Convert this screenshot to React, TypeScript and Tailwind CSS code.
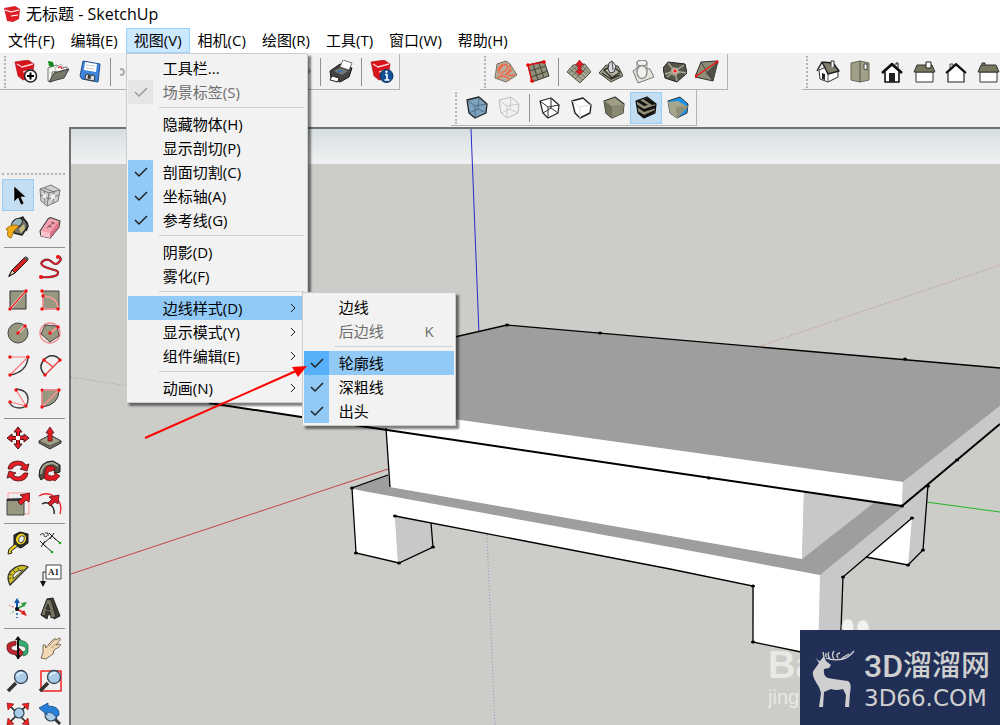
import type { ReactNode } from 'react';

type IconProps = { children: ReactNode };

function Icon({ children }: IconProps) {
  return (
    <svg viewBox="0 0 24 24" className="size-6 shrink-0" aria-hidden="true" strokeLinejoin="round">
      {children}
    </svg>
  );
}

const redBook = (
  <>
    <path d="M1 2 14 0l6 4-2 14-9 2-5-4Z" fill="#d8141c" stroke="#a50d12" strokeWidth=".6" />
    <path d="m3 4 5 3 11-3M9 12l9-2M10 16l7-2" fill="none" stroke="#ffd5d5" strokeWidth="1.3" />
  </>
);

const icons = {
  create: (
    <Icon>
      {redBook}
      <circle cx="16.5" cy="16" r="6" fill="#fff" stroke="#222" strokeWidth="1.6" />
      <path d="M16.5 12.5v7M13 16h7" stroke="#000" strokeWidth="2" />
    </Icon>
  ),
  open: (
    <Icon>
      <path d="M2 8v13l4 1V12l15-2V7l-8 1-2-3Z" fill="#f3f3ee" stroke="#555" strokeWidth=".8" />
      <path d="m9 8 6-4 3 6-7 2Z" fill="#fff" stroke="#888" strokeWidth=".6" />
      <path d="M12 8q3-3 4 1" fill="none" stroke="#d33" strokeWidth="1.6" />
      <path d="m3 22 5-9 15-4-5 9Z" fill="#77776a" stroke="#333" strokeWidth=".9" />
      <path d="m2 1 5 1 1 4-3 1-2-1Z" fill="#128a1b" />
    </Icon>
  ),
  save: (
    <Icon>
      <path d="m5 1 17 3-2 18-16-3-2-3Z" fill="#3e86dd" stroke="#22508c" />
      <path d="m7 2 12 2-1 8L6 10Z" fill="#fff" />
      <path d="m8 5 9 1M8 8l8 1" stroke="#aaa" strokeWidth=".7" />
      <path d="m8 14 9 2-1 5-9-2Z" fill="#ddd" stroke="#333" strokeWidth=".9" />
      <path d="m10 15 3 .5-.5 3.5-3-.5Z" fill="#333" />
    </Icon>
  ),
  blank: (
    <Icon>
      <path d="M1 9q4 0 4 3t-4 3M18 7l4 4-4 4" fill="none" stroke="#aaa" strokeWidth="2" />
    </Icon>
  ),
  print: (
    <Icon>
      <path d="m1 11 10-7 12 4-3 9-9 5-9-4Z" fill="#444" stroke="#181818" />
      <path d="m11 7 3-7 9 3-3 7Z" fill="#fff" stroke="#555" strokeWidth=".8" />
      <path d="m5 11 6-3 8 3-6 4Z" fill="#777" />
      <path d="m8 11 4-1 2 1-4 2Z" fill="#2f75b5" />
      <path d="m3 16 7 2-1 4-8-2Z" fill="#fff" stroke="#222" />
    </Icon>
  ),
  info: (
    <Icon>
      {redBook}
      <circle cx="16.5" cy="16" r="6.5" fill="#134f94" stroke="#0b2e58" />
      <path d="M15 14.5h2V20M14.5 20h5" stroke="#fff" strokeWidth="1.6" fill="none" />
      <circle cx="16.5" cy="11.8" r="1.2" fill="#fff" />
    </Icon>
  ),
  contours: (
    <Icon>
      <path d="m3 4 9-3 4 3 7 11-11 7-11-4Z" fill="#b9ae9c" stroke="#777060" />
      <path d="M3 18q7-5 13 2M5 14q0-8 7-10 4 5-3 8-3 2 0 4M9 4q-5 3-5 7M15 5q3 5-2 8 4 5 8 1M11 15l7-5" fill="none" stroke="#ee6a4a" strokeWidth="1.4" />
    </Icon>
  ),
  scratch: (
    <Icon>
      <path d="m2 5 16-4 5 15-17 6Z" fill="#8f8f7a" stroke="#3a3a32" />
      <path d="m7 4 5 16M13 3l5 15M3 11l17-5M5 17l17-6" stroke="#444438" />
      <path d="M18 2 2 5l4 17" fill="none" stroke="#e0121a" strokeWidth="1.4" />
      <circle cx="18" cy="2" r="1.8" fill="#e00" /><circle cx="2" cy="5" r="1.8" fill="#e00" /><circle cx="6" cy="21" r="1.8" fill="#e00" />
    </Icon>
  ),
  smoove: (
    <Icon>
      <path d="m0 12 6-7 12-1 6 8-11 11Z" fill="#a8a792" stroke="#55554a" />
      <path d="m3 9 13 11M5 6l13 11M9 5l11 9M13 4l9 9M20 7 8 19M17 5 5 16M12 5 2 13" stroke="#5d5d50" strokeWidth=".8" />
      <path d="m12.500 0 4 5h-2.500v6h2.500l-4 4-4-4h2.500V5H8.500Z" fill="#e31b23" stroke="#8b0d10" strokeWidth=".6" />
    </Icon>
  ),
  stamp: (
    <Icon>
      <path d="m0 13 7-8 12 1 5 10-12 6Z" fill="#9d9c86" stroke="#3f3f35" />
      <path d="m5 10 8-4 8 6-8 6ZM3 13l9 6 9-4" fill="#bdbca8" stroke="#33332b" strokeWidth="1.500" />
      <path d="m9 9 1-6 3-2 4 5-2 6-4 1Z" fill="#d9dade" stroke="#35353a" />
      <path d="m13 2 1 8" stroke="#555" />
    </Icon>
  ),
  drape: (
    <Icon>
      <path d="m2 11 5-4 12 2 4 8-16 6Z" fill="#e4e4dc" stroke="#777" />
      <ellipse cx="11" cy="3" rx="5" ry="3" fill="none" stroke="#888" strokeWidth="1.4" />
      <ellipse cx="11" cy="12" rx="5" ry="6.500" fill="#f0f0ea" stroke="#888" strokeWidth="1.300" />
      <path d="M6 3v9M16 3v9" stroke="#999" />
    </Icon>
  ),
  detail: (
    <Icon>
      <path d="m0 8 5-6 17 2 2 9-10 9L2 18Z" fill="#55554a" stroke="#222" />
      <path d="m5 3 7 8L2 14M21 5l-9 6 11 2M14 21l-2-10-8 6" fill="none" stroke="#a9a893" strokeWidth="1.500" />
      <path d="m9 7 6 1 2 5-6 3-4-3Z" fill="#a5a38f" />
      <circle cx="12" cy="11" r="2" fill="#f11" stroke="#fff" strokeWidth=".6" />
    </Icon>
  ),
  flip: (
    <Icon>
      <path d="m6 2 17-1-5 20L0 17Z" fill="#8d8c76" stroke="#333" />
      <path d="m23 1-5 20-7-8Z" fill="#4f4f44" />
      <path d="m6 2 6 10 6 9" fill="none" stroke="#444" />
      <path d="M23 1 0 17" stroke="#e11" strokeWidth="1.300" />
      <circle cx="22" cy="2" r="1.500" fill="#e11" /><circle cx="1" cy="16" r="1.500" fill="#e11" />
    </Icon>
  ),
  iso: (
    <Icon>
      <path d="m3 10 1 9 8 3 10-5v-6l-5-7Z" fill="#fff" stroke="#333" />
      <path d="m12 14v8" stroke="#555" />
      <path d="m6 2 11 1 6 8-11 3L6 2 1 11" fill="#7e7d69" stroke="#222" strokeWidth="1.500" />
      <path d="M15 6V1h3v7" fill="#fff" stroke="#333" />
      <path d="m6 13 3 1v6l-3-1Z" fill="#222" />
    </Icon>
  ),
  top: (
    <Icon>
      <path d="m3 3 9-2 9 2v17l-9 2-9-2Z" fill="#a09f87" stroke="#66665a" />
      <path d="M12 1v21" stroke="#55554a" />
      <path d="M16 4h3v6l-3-1Z" fill="#fff" stroke="#444" />
    </Icon>
  ),
  front: (
    <Icon>
      <path d="M5 11v11h14V11l-7-6Z" fill="#fff" stroke="#111" strokeWidth="1.600" />
      <path d="M16 5V3h2v5" stroke="#111" fill="#fff" />
      <path d="m2 13 10-9 10 9" fill="none" stroke="#111" strokeWidth="2.400" />
      <path d="M9 13h6v9H9Z" fill="#222" />
    </Icon>
  ),
  right: (
    <Icon>
      <path d="M4 12h17v10H4Z" fill="#fff" stroke="#333" />
      <path d="m2 12 3-7h15l3 7Z" fill="#77775f" stroke="#333" />
      <path d="M14 2h5v6h-5Z" fill="#fff" stroke="#222" />
    </Icon>
  ),
  back: (
    <Icon>
      <path d="M4 12v10h16V12l-8-7Z" fill="#fff" stroke="#222" strokeWidth="1.200" />
      <path d="M6 9V4h3v3" fill="#ccc" stroke="#555" />
      <path d="m2 13 10-9 10 9" fill="none" stroke="#111" strokeWidth="2" />
    </Icon>
  ),
  left: (
    <Icon>
      <path d="M4 12h17v10H4Z" fill="#fff" stroke="#333" />
      <path d="m2 12 3-7h15l3 7Z" fill="#77775f" stroke="#333" />
      <path d="M6 5V3h3v2" fill="#77775f" stroke="#333" />
    </Icon>
  ),
  xray: (
    <Icon>
      <path d="m2 4 12-3 8 7-1 9-11 5-6-5Z" fill="#7ea3bd" stroke="#222" strokeWidth="1.300" />
      <path d="m2 4 8 6 12-2M10 10v12M14 1l-1 12 8 4M4 17l9-4" fill="none" stroke="#426176" strokeWidth=".8" />
    </Icon>
  ),
  backEdges: (
    <Icon>
      <path d="m2 4 12-3 8 7-1 9-11 5-6-5Z" fill="#f1f1f1" stroke="#bbb" />
      <path d="m2 4 8 6 12-2M10 10v12M14 1l-1 12 8 4M4 17l9-4" fill="none" stroke="#c9c9c9" />
    </Icon>
  ),
  wireframe: (
    <Icon>
      <path d="m2 5 11-3 8 7-1 8-10 5-5-5Z" fill="#fff" stroke="#222" strokeWidth="1.200" />
      <path d="m2 5 8 6 11-2M10 11v11M13 2v10l7 5M5 17l8-5" fill="none" stroke="#333" />
    </Icon>
  ),
  hiddenLine: (
    <Icon>
      <path d="m2 5 11-3 8 7-1 8-10 5-5-5Z" fill="#fff" stroke="#222" strokeWidth="1.400" />
      <path d="m2 5 8 6 11-2M10 11v11" fill="none" stroke="#ddd" />
    </Icon>
  ),
  shaded: (
    <Icon>
      <path d="m2 5 11-4 9 7-1 9-11 5-6-5Z" fill="#a09e86" stroke="#333" strokeWidth="1.200" />
      <path d="m10 10 12-2-1 9-11 5Z" fill="#8b8973" />
      <path d="m2 5 8 5v12L4 17Z" fill="#727160" />
    </Icon>
  ),
  textured: (
    <Icon>
      <path d="m2 5 11-4 9 7-1 9-11 5-6-5Z" fill="#918f78" stroke="#111" strokeWidth="1.200" />
      <path d="m2 5 4-1 8 5-4 1ZM9 3l4-1 9 6-4 1ZM2 8l8 5 12-4v3l-12 4-7-5ZM4 15l6 4 11-5-1 3-10 5-5-4Z" fill="#111" />
    </Icon>
  ),
  mono: (
    <Icon>
      <path d="m2 5 12-4 8 7-1 9-10 5-7-5Z" fill="#1794ea" stroke="#333" />
      <path d="m2 6 10-1 10 6-11 11-7-5Z" fill="#a7a58d" />
      <path d="m10 11 12-1-11 12Z" fill="#918f78" />
    </Icon>
  ),
  select: (
    <Icon>
      <path d="M8 3v16l4-4 3 7 3-1.500-3-6.500h5Z" fill="#000" stroke="#fff" strokeWidth=".5" />
    </Icon>
  ),
  component: (
    <Icon>
      <path d="m2 6 11-4 9 5-2 11-11 5-6-5Z" fill="#d0d0d0" stroke="#777" />
      <path d="m2 6 9 4 11-3M11 10 9 23M6 5l10 4-1 11M3 12l8 4 10-4M6 8l1 12" fill="none" stroke="#777" />
      <path d="m5 10 3 2v4l-3-2ZM13 12l4-1v4l-4 2Z" fill="#eee" />
    </Icon>
  ),
  paint: (
    <Icon>
      <path d="m8 5 9-4 5 9-6 9-8-2Z" fill="#74746a" stroke="#222" strokeWidth="1.400" />
      <ellipse cx="11" cy="7" rx="6" ry="4" fill="#95b7bb" stroke="#222" transform="rotate(-35 11 7)" />
      <path d="M15 2q10 4 5 13" fill="none" stroke="#222" strokeWidth="1.500" />
      <path d="M0 13q6-6 13-3-6 4-8 12-5-1-3-7Z" fill="#efac16" stroke="#8b5e00" strokeWidth=".8" />
      <path d="m13 13 5-5 1 5-4 4Z" fill="#c5b979" />
    </Icon>
  ),
  eraser: (
    <Icon>
      <path d="m2 15 8-12q2-2 4-1l8 3-1 6-9 11-9-2Z" fill="#f4a3b1" stroke="#444" strokeWidth="1.200" />
      <path d="m3 15 9 2v5l-9-2Z" fill="#f9c3cd" /><path d="m12 17 9-12v6l-9 11Z" fill="#dd7286" />
      <path d="m9 12 7-6M10 10l4 1M13 6l4 2" stroke="#8c5060" />
    </Icon>
  ),
  pencil: (
    <Icon>
      <path d="m3 21 3-6L19 2l3 3L9 18Z" fill="#d62322" stroke="#222" />
      <path d="m6 15 3 3-6 3Z" fill="#e8d1a8" stroke="#222" /><path d="m18 3 3 3 2-2-3-3Z" fill="#555" />
      <path d="m2 22 2-3 1 2Z" fill="#111" />
    </Icon>
  ),
  freehand: (
    <Icon>
      <path d="M2 22q12 1 17-2 3-4-3-5l-9-3q-6-3-2-6 5-3 9 1t7 0q4-3-1-6" fill="none" stroke="#333" strokeWidth="2.200" />
      <path d="M2 22q12 1 17-2 3-4-3-5l-9-3q-6-3-2-6 5-3 9 1t7 0q4-3-1-6" fill="none" stroke="#df1c27" strokeWidth="1.600" />
      <circle cx="3" cy="22" r="2" fill="#e11" /><circle cx="20" cy="2" r="2" fill="#e11" />
    </Icon>
  ),
  rect: (
    <Icon>
      <path d="M4 3h16v18H4Z" fill="#98977f" stroke="#333" />
      <path d="M20 3 4 21" stroke="#fff" strokeWidth="2.500" /><path d="M20 3 4 21" stroke="#e11" strokeWidth="1.200" />
      <circle cx="20" cy="3" r="1.700" fill="#e11" /><circle cx="4" cy="21" r="1.700" fill="#e11" />
    </Icon>
  ),
  rotRect: (
    <Icon>
      <path d="M5 3h16v18H5Z" fill="#98977f" stroke="#444" />
      <path d="M5 3v18h15Q20 9 5 8" fill="none" stroke="#ff9b9b" strokeWidth="1.500" />
      <circle cx="4" cy="3" r="1.700" fill="#e11" /><circle cx="5" cy="8" r="1.700" fill="#e11" />
      <circle cx="4" cy="21" r="1.700" fill="#e11" /><circle cx="20" cy="21" r="1.700" fill="#e11" />
    </Icon>
  ),
  circle: (
    <Icon>
      <circle cx="12" cy="12" r="10" fill="#98977f" stroke="#444" />
      <path d="m12 12 7-7" stroke="#fff" strokeWidth="2.500" /><path d="m12 12 7-7" stroke="#e44" strokeWidth="1.200" />
      <circle cx="12" cy="12" r="1.700" fill="#e11" /><circle cx="19" cy="5" r="1.700" fill="#e11" />
    </Icon>
  ),
  polygon: (
    <Icon>
      <circle cx="12" cy="12" r="10" fill="none" stroke="#f28d8d" strokeWidth="1.400" />
      <path d="m7 4 12 1 2 10-9 6-9-8Z" fill="#98977f" stroke="#444" />
      <path d="m12 12 8-6" stroke="#f99" strokeWidth="1.800" />
      <circle cx="12" cy="12" r="1.700" fill="#e11" /><circle cx="20" cy="6" r="1.700" fill="#e11" />
    </Icon>
  ),
  arc: (
    <Icon>
      <path d="M22 3q-1 15-18 18" fill="none" stroke="#333" strokeWidth="1.400" />
      <path d="M4 3h18L4 21" fill="none" stroke="#f77" strokeWidth="1.200" />
      <circle cx="4" cy="3" r="1.700" fill="#e11" /><circle cx="22" cy="3" r="1.700" fill="#e11" /><circle cx="4" cy="21" r="1.700" fill="#e11" />
    </Icon>
  ),
  arc2: (
    <Icon>
      <path d="M7 21Q0 14 5 7q6-8 14-4l3 3" fill="none" stroke="#333" strokeWidth="1.500" />
      <path d="M22 6 7 21M6 6l9 7" stroke="#e33" strokeWidth="1.200" />
      <circle cx="22" cy="6" r="1.700" fill="#e11" /><circle cx="7" cy="21" r="1.700" fill="#e11" /><circle cx="6" cy="6" r="1.700" fill="#e11" />
    </Icon>
  ),
  arc3: (
    <Icon>
      <path d="M10 2q12 1 12 10t-8 9-10-5" fill="none" stroke="#444" strokeWidth="1.400" />
      <path d="m10 3 10 16-16-4" fill="none" stroke="#f77" strokeWidth="1.200" />
      <circle cx="10" cy="3" r="1.700" fill="#e11" /><circle cx="20" cy="19" r="1.700" fill="#e11" /><circle cx="4" cy="15" r="1.700" fill="#e11" />
    </Icon>
  ),
  pie: (
    <Icon>
      <path d="M4 3h17q0 15-17 17Z" fill="#98977f" stroke="#333" />
      <path d="M4 20V3h17L4 20" fill="none" stroke="#ff9292" strokeWidth="1.500" />
      <circle cx="4" cy="3" r="1.500" fill="#e11" /><circle cx="21" cy="3" r="1.700" fill="#e11" /><circle cx="4" cy="20" r="1.700" fill="#e11" />
    </Icon>
  ),
  move: (
    <Icon>
      <path d="m12 1 4 5h-2.500v4H18V8l5 4-5 4v-2.500h-4.500V18H16l-4 5-4-5h2.500v-4.500H6V16l-5-4 5-4v2.500h4.500V6H8Z" fill="#e51d24" stroke="#4b1212" />
      <path d="M10 10h4v4h-4Z" fill="#fff" />
    </Icon>
  ),
  pushPull: (
    <Icon>
      <path d="m1 15 11-6 11 6v2l-11 6-11-6Z" fill="#6f6f5e" stroke="#333" />
      <path d="m1 15 11-6 11 6-11 5Z" fill="#a19f89" stroke="#333" strokeWidth=".7" />
      <path d="m12 1 4 6h-2v8h-4V7H8Z" fill="#e51d24" stroke="#5c1212" strokeWidth=".8" />
    </Icon>
  ),
  rotate: (
    <Icon>
      <path d="M2 10q1-8 10-8 5 0 8 4l3-1-2 7-7-2 3-2q-6-5-11 2Z" fill="#e51d24" stroke="#4b1212" strokeWidth=".8" />
      <path d="M22 14q-1 8-10 8-5 0-8-4l-3 1 2-7 7 2-3 2q6 5 11-2Z" fill="#e51d24" stroke="#4b1212" strokeWidth=".8" />
    </Icon>
  ),
  followMe: (
    <Icon>
      <path d="M1 17Q1 2 15 2l7 4v7l-4 1-4-4q-7 0-7 8l-4 3Z" fill="#4f4f45" stroke="#1c1c18" />
      <path d="M3 15Q4 4 15 4l5 3" fill="none" stroke="#a7a58f" strokeWidth="2" />
      <path d="M8 8q6-3 10 2l-4 2q-5 0-4 4 4 2 7 0l-1-3 6 4-5 5-2-1q-6 2-9-2Z" fill="#de1820" stroke="#551010" strokeWidth=".7" />
    </Icon>
  ),
  scale: (
    <Icon>
      <path d="M2 1h21v21H2Z" fill="none" stroke="#f99" />
      <path d="M1 7h17v16H1Z" fill="#98977f" stroke="#444" />
      <path d="m1 7 17-1v3H1Z" fill="#333" />
      <path d="m24 1-1 9-3-2-5 5-3-3 5-5-3-2Z" fill="#e51d24" stroke="#4b1212" strokeWidth=".8" />
    </Icon>
  ),
  offset: (
    <Icon>
      <path d="M1 4Q9-1 17 5t5 17" fill="none" stroke="#ee2a32" strokeWidth="1.400" />
      <path d="M4 12q5-3 9 1t3 9" fill="none" stroke="#222" strokeWidth="1.400" />
      <path d="m21 3-1 9-3-2-5 4-2-3 4-4-3-2Z" fill="#d81f28" stroke="#551010" strokeWidth=".8" />
    </Icon>
  ),
  tape: (
    <Icon>
      <path d="m8 4 6-3 8 2v9l-7 5-7-3Z" fill="#333" stroke="#111" />
      <ellipse cx="15" cy="8" rx="5.500" ry="6" fill="#f0d51a" stroke="#222" transform="rotate(25 15 8)" />
      <ellipse cx="15.500" cy="8" rx="2.500" ry="3.500" fill="#eee" stroke="#555" transform="rotate(25 15 8)" />
      <path d="m9 13 3 2-7 5 1 2-4 1 1-5Z" fill="#f0d51a" stroke="#222" />
    </Icon>
  ),
  dimension: (
    <Icon>
      <path d="m5 13 9-8 8 7M5 13l9 8M2 10l6 6M11 2l7 7M16 2l-4 6M3 16l4-6" fill="none" stroke="#222" />
      <path d="M2 4q4-3 4 0t3 1M7 2h3v3" fill="none" stroke="#333" />
      <circle cx="22" cy="12" r="1.300" fill="#1a1" /><circle cx="14" cy="21" r="1.300" fill="#1a1" />
    </Icon>
  ),
  protractor: (
    <Icon>
      <path d="M4 21Q-1 11 7 5t15-2Z" fill="#cdbf27" stroke="#333" strokeWidth="1.400" />
      <path d="M7 15q-1-8 10-9Z" fill="#f0f0f0" stroke="#444" />
      <path d="m2 15 3-1M3 10l3 1M7 6l2 2M12 4l1 2" stroke="#554f00" />
    </Icon>
  ),
  label: (
    <Icon>
      <path d="M8 1h15v14H8Z" fill="#fff" stroke="#444" />
      <text x="10" y="11" fontSize="9" fontFamily="Liberation Serif, serif" fontWeight="bold" fill="#222">A1</text>
      <path d="M8 8H5v10" fill="none" stroke="#333" /><path d="M2 17h6l-3 6Z" fill="#111" />
    </Icon>
  ),
  axes: (
    <Icon>
      <path d="M11 12V3" stroke="#1456a8" strokeWidth="2" /><path d="m8 6 3-5 3 5Z" fill="#1456a8" />
      <path d="m11 12 7-4" stroke="#299b39" strokeWidth="1.600" /><path d="m15 6 6-1-3 5Z" fill="#299b39" />
      <path d="m11 12 7 4" stroke="#d22" strokeWidth="1.800" /><path d="m18 13 3 6-6-2Z" fill="#d22" />
      <path d="M11 12v9" stroke="#1456a8" strokeWidth="1.500" strokeDasharray="2" />
      <path d="m11 12-8-4" stroke="#d22" strokeDasharray="2" /><path d="m11 12-7 5" stroke="#2a4" strokeDasharray="2" />
      <circle cx="11" cy="12" r="2" fill="#111" />
    </Icon>
  ),
  text3d: (
    <Icon>
      <path d="m3 18 6-16 6-1 7 18-6 3-2-5-4 1-1 4Z" fill="#3c3b31" stroke="#222" />
      <path d="m3 18 6-16 4 1 5 17-5 1-1-6-4-1-1 5ZM10 7l-2 5 4 1Z" fill="#77755f" fillRule="evenodd" stroke="#222" strokeWidth=".8" />
    </Icon>
  ),
  orbit: (
    <Icon>
      <path d="M1 13V9q1-3 9-4v4q-5 1-5 3 0 3 8 3v-3l5 5-5 5v-3Q2 19 1 13Z" fill="#bd2530" stroke="#511" strokeWidth=".7" />
      <path d="M12 4q10 1 10 6v6q0 3-5 4v-4q3-1 3-3 0-3-8-4Z" fill="#37ae70" stroke="#165c39" strokeWidth=".7" />
      <path d="M12 1v22" stroke="#111" strokeWidth="2" /><path d="m9 4 3-4 3 4M9 19l3 4 3-4" fill="#111" />
    </Icon>
  ),
  pan: (
    <Icon>
      <path d="M3 22q3-5 2-12 0-2 2-1l1 3q4-6 8-9 2-1 2 1l3-2q2 0 1 2l-4 5 4-1q2 1-1 3l-5 3-1 4-7 5Z" fill="#f1dab5" stroke="#6e6049" strokeWidth=".9" />
      <path d="m11 10 6-6M13 12l5-4" stroke="#9b8767" strokeWidth=".8" />
    </Icon>
  ),
  zoom: (
    <Icon>
      <path d="m10 14-8 8" stroke="#333" strokeWidth="3.500" />
      <circle cx="15" cy="8" r="6.500" fill="#a9cce9" stroke="#345" strokeWidth="1.300" />
      <path d="M11 7q2-4 6-3" stroke="#e5f3ff" fill="none" strokeWidth="1.500" />
    </Icon>
  ),
  zoomWindow: (
    <Icon>
      <path d="M3 2h20v20H3Z" fill="none" stroke="#e22" strokeWidth="1.500" />
      <path d="m10 14-8 8" stroke="#333" strokeWidth="3.500" />
      <circle cx="16" cy="8" r="6.500" fill="#a9cce9" stroke="#345" strokeWidth="1.300" />
      <path d="M12 7q2-4 6-3" stroke="#e5f3ff" fill="none" strokeWidth="1.500" />
    </Icon>
  ),
  zoomExtents: (
    <Icon>
      <path d="m3 3 18 18M21 3 3 21" stroke="#222" strokeWidth="1.600" />
      <path d="m1 1 7 1-6 6ZM23 1l-7 1 6 6ZM23 23l-7-1 6-6ZM1 23l7-1-6-6Z" fill="#e22" stroke="#711" strokeWidth=".6" />
      <circle cx="13" cy="11" r="5" fill="#a9cce9" stroke="#345" strokeWidth="1.200" />
    </Icon>
  ),
  previous: (
    <Icon>
      <path d="m16 16 6 6" stroke="#333" strokeWidth="3" />
      <circle cx="13" cy="13" r="6" fill="#a9cce9" stroke="#345" strokeWidth="1.200" />
      <path d="m1 6 9-5v3q12 0 11 9-3 3-4 1-2-4-8-4v3Z" fill="#2780d8" stroke="#184a80" strokeWidth=".8" />
    </Icon>
  ),
};

type IconName = keyof typeof icons;
type Tool = [IconName, string];

function ToolButton({ tool, active = false }: { tool: Tool; active?: boolean }) {
  return (
    <button
      type="button"
      aria-label={tool[1]}
      aria-pressed={active}
      className={`flex size-8 shrink-0 items-center justify-center border ${active ? 'border-[#99ccf3] bg-[#c3ddf3]' : 'border-transparent'}`}>
      {icons[tool[0]]}
    </button>
  );
}

type ToolbarProps = { name: string; groups: Tool[][]; active?: IconName; className?: string };

function Toolbar({ name, groups, active, className = '' }: ToolbarProps) {
  return (
    <div role="toolbar" aria-label={name} className={`flex h-9 shrink-0 items-center border-b border-[#b4b4b4] bg-[#f2f2f2] ${className}`}>
      <span className="mr-1 ml-1 h-8 w-0.5 border-l-2 border-dotted border-[#b5b5b5]" />
      {groups.map((group, i) => (
        <div key={i} className="flex items-center">
          {i > 0 && <span className="mx-1 h-7 w-px bg-[#909090]" />}
          {group.map((tool) => <ToolButton key={tool[0] + tool[1]} tool={tool} active={tool[0] === active} />)}
        </div>
      ))}
    </div>
  );
}

const standardTools: Tool[][] = [
  [['create', '新建'], ['open', '打开'], ['save', '保存']],
  [['blank', '剪切'], ['blank', '复制'], ['blank', '粘贴'], ['blank', '删除']],
  [['blank', '撤销'], ['blank', '重做']],
  [['print', '打印']],
  [['info', '模型信息']],
];

const sandboxTools: Tool[][] = [
  [['contours', '根据等高线创建'], ['scratch', '根据网格创建']],
  [['smoove', '曲面起伏'], ['stamp', '曲面平整'], ['drape', '曲面投射'], ['detail', '添加细部'], ['flip', '对调角线']],
];

const viewTools: Tool[][] = [
  [['iso', '等轴'], ['top', '俯视图'], ['front', '前视图'], ['right', '右视图'], ['back', '后视图'], ['left', '左视图']],
];

const styleTools: Tool[][] = [
  [['xray', 'X 光透视模式'], ['backEdges', '后边线']],
  [['wireframe', '线框显示'], ['hiddenLine', '消隐'], ['shaded', '阴影'], ['textured', '材质贴图'], ['mono', '单色显示']],
];

const paletteTools: Tool[][] = [
  [['select', '选择'], ['component', '制作组件'], ['paint', '材质'], ['eraser', '擦除']],
  [
    ['pencil', '直线'], ['freehand', '手绘线'], ['rect', '矩形'], ['rotRect', '旋转长方形'], ['circle', '圆'],
    ['polygon', '多边形'], ['arc', '圆弧'], ['arc2', '两点圆弧'], ['arc3', '3点画弧'], ['pie', '扇形'],
  ],
  [['move', '移动'], ['pushPull', '推拉'], ['rotate', '旋转'], ['followMe', '路径跟随'], ['scale', '缩放'], ['offset', '偏移']],
  [['tape', '卷尺'], ['dimension', '尺寸'], ['protractor', '量角器'], ['label', '文字'], ['axes', '轴'], ['text3d', '三维文字']],
  [['orbit', '环绕观察'], ['pan', '平移'], ['zoom', '缩放视图'], ['zoomWindow', '缩放窗口'], ['zoomExtents', '充满视窗'], ['previous', '上一个']],
];

type Entry = { label: string; checked?: boolean; disabled?: boolean; shortcut?: string; active?: boolean; arrow?: boolean };

const edgeMenu: (Entry | null)[] = [
  { label: '边线' },
  { label: '后边线', disabled: true, shortcut: 'K' },
  null,
  { label: '轮廓线', checked: true, active: true },
  { label: '深粗线', checked: true },
  { label: '出头', checked: true },
];

const viewMenu: (Entry | null)[] = [
  { label: '工具栏...' },
  { label: '场景标签(S)', checked: true, disabled: true },
  null,
  { label: '隐藏物体(H)' },
  { label: '显示剖切(P)' },
  { label: '剖面切割(C)', checked: true },
  { label: '坐标轴(A)', checked: true },
  { label: '参考线(G)', checked: true },
  null,
  { label: '阴影(D)' },
  { label: '雾化(F)' },
  null,
  { label: '边线样式(D)', arrow: true, active: true },
  { label: '显示模式(Y)', arrow: true },
  { label: '组件编辑(E)', arrow: true },
  null,
  { label: '动画(N)', arrow: true },
];

function checkColor(entry: Entry) {
  if (entry.disabled) return 'bg-[#e6e6e6]';
  return entry.active ? 'bg-[#56b0fa]' : 'bg-[#91c9f7]';
}

function MenuEntry({ entry, children }: { entry: Entry; children?: ReactNode }) {
  const tone = `${entry.active ? 'bg-[#91c9f7]' : ''} ${entry.disabled ? 'text-[#6d6d6d]' : 'text-black'}`;
  if (entry.checked) {
    return (
      <label className={`relative flex h-6 items-center ${tone}`}>
        <input type="checkbox" defaultChecked disabled={entry.disabled} className={`h-6 w-[25px] appearance-none ${checkColor(entry)}`} />
        <svg viewBox="0 0 14 12" className="pointer-events-none absolute left-1.5 h-3 w-3.5" aria-hidden="true">
          <path d="m1 6 4 4 8-8" fill="none" stroke={entry.disabled ? '#999' : '#222'} strokeWidth="1.500" />
        </svg>
        <span className="ml-2.5">{entry.label}</span>
      </label>
    );
  }
  return (
    <div className="relative">
      <button type="button" disabled={entry.disabled} className={`flex h-6 w-full items-center pr-2.5 pl-[35px] text-left ${tone}`}>
        {entry.label}
        {entry.shortcut && <span className="mr-2.5 ml-auto">{entry.shortcut}</span>}
        {entry.arrow && (
          <svg viewBox="0 0 6 10" className="ml-auto h-2.5 w-1.5" aria-hidden="true">
            <path d="m1 1 4 4-4 4" fill="none" stroke="#222" />
          </svg>
        )}
      </button>
      {children}
    </div>
  );
}

function Menu({ entries, className, render }: { entries: (Entry | null)[]; className: string; render?: (entry: Entry) => ReactNode }) {
  return (
    <div className={`absolute border border-[#cccccc] bg-[#f2f2f2] px-px py-0.5 whitespace-nowrap shadow-[3px_3px_2px_rgba(0,0,0,0.5)] ${className}`}>
      {entries.map((entry, i) => entry
        ? <MenuEntry key={entry.label} entry={entry}>{render?.(entry)}</MenuEntry>
        : <hr key={i} className="mt-[3px] mr-0.5 mb-1 ml-[31px] border-t border-[#d2d2d2]" />)}
    </div>
  );
}

const menuTitles = ['文件(F)', '编辑(E)', '视图(V)', '相机(C)', '绘图(R)', '工具(T)', '窗口(W)', '帮助(H)'];

function MenuBar() {
  return (
    <nav className="relative z-20 flex h-[25px] bg-white">
      {menuTitles.map((title) => {
        const open = title === '视图(V)';
        return (
          <div key={title} className="relative">
            <button type="button" aria-expanded={open} className={`h-full border px-[7px] pb-px ${open ? 'border-[#99d1ff] bg-[#cce8ff]' : 'border-transparent'}`}>
              {title}
            </button>
            {open && (
              <Menu
                entries={viewMenu}
                className="top-full left-0 w-[182px]"
                render={(entry) => entry.label === '边线样式(D)' && <Menu entries={edgeMenu} className="-top-1 left-[174px] w-[154px]" />}
              />
            )}
          </div>
        );
      })}
    </nav>
  );
}

// Coordinates are window pixels, the viewport starts at 71,129.
const nodes = [
  [507, 325], [600, 333], [905, 359], [902, 506], [709, 478], [957, 460], [352, 488], [356, 553], [399, 563], [433, 547],
  [395, 516], [753, 586], [753, 642], [843, 577], [912, 518], [928, 486], [923, 550], [908, 565],
];

function Scene() {
  return (
    <svg viewBox="71 129 929 596" preserveAspectRatio="xMinYMin slice" className="absolute inset-0 size-full" role="img" aria-label="模型视图">
      <defs>
        <linearGradient id="sky" x1="0" y1="0" x2="0" y2="1">
          <stop offset="0" stopColor="#d7dee2" />
          <stop offset="1" stopColor="#f0f2f2" />
        </linearGradient>
      </defs>
      <path d="M71 129h929v596H71Z" fill="#cccdc8" />
      <path d="M71 129h929v35H71Z" fill="url(#sky)" />
      <path d="m471 129 8 205" stroke="#2a2ac8" />
      <path d="m487 535 8 190" stroke="#9292bd" strokeDasharray="1 2" />
      <path d="m71 574 320-106" stroke="#c04545" />
      <path d="m760 346 240-81" stroke="#c88080" strokeDasharray="1 2" />
      <path d="m926 502 74 10" stroke="#23b523" />
      <path d="m71 377 70 11" stroke="#86b086" strokeDasharray="1 2" />

      <path d="m820 575 83-69 25-21-5 65-15 15 4-47-69 59-3 75-22 4Z" fill="#c8c8c8" />
      <path d="m912 518-45 39 41 8Z" fill="#fff" />
      <path d="m352 488 36-13 2 12 412 72 71-57 30 5-83 68v4l-428-79Z" fill="#9e9e9e" />
      <path d="m352 489 318 58 150 28-2 82-18-5-47-10 1-56-84-17-275-53 3 47-43-10Z" fill="#fff" />
      <path d="m395 516 36 7 2 24-35 16Z" fill="#c8c8c8" />
      <path d="m386 428 418 62-2 69-412-72Z" fill="#fff" />
      <path d="m804 490 71 12-73 57Z" fill="#c8c8c8" />
      <path d="m507 325 493 43v38l-97 76-443-62-245-33Z" fill="#9e9e9e" />
      <path d="m215 387 245 33 443 62-1 24-232-34-303-45-158-24Z" fill="#fff" />
      <path d="m903 482 97-76v18l-98 82Z" fill="#c8c8c8" />

      <g fill="none" stroke="#000" strokeWidth="1.300">
        <path d="M215 392 507 325l493 43" />
        <path d="m209 403 158 24 303 45 232 34" strokeWidth="2" />
        <path d="m902 506 98-82" strokeWidth="2" />
        <path d="m386 428 4 59M388 475l-36 13 4 65 43 10 34-16-2-24" />
        <path d="m395 516 275 53 83 17v56l48 10" />
        <path d="m840 655 3-78 69-59M866 557l42 8 15-15 5-65" />
      </g>
      {nodes.map(([x, y]) => <ellipse key={`${x}-${y}`} cx={x} cy={y} rx="2" ry="1.500" />)}

      <g fill="#f2f2ef" stroke="#d8d8d4">
        <ellipse cx="848" cy="627" rx="6" ry="8" />
        <ellipse cx="863" cy="628" rx="6" ry="8" />
      </g>
    </svg>
  );
}

function SiteBadge() {
  return (
    <div className="absolute right-0 bottom-0 flex h-[95px] w-[200px] items-center bg-[#212f56] pt-1 pl-3 text-[#cfcfcf]">
      <svg viewBox="0 0 44 60" className="h-[60px] w-11 shrink-0" aria-hidden="true">
        <path d="M3 7q2 3 5 4l4-5 2 5 5 4-2 3-5 1q-1 7 4 9 12 2 20 3 4 2 2 12l-1 14h-4l1-12-3-6q-7 2-12 0l-7 3-1 15H7l2-14-2-6Q-2 24 2 20L7 13Z" fill="currentColor" />
        <path d="m12 7-1-5M14 8q7 3 17 1 5-1 11-8M18 9q-3-4-1-7M22 9q-3-4 0-8M26 8q-3-4 2-5M30 8l7-4M14 7V3" fill="none" stroke="currentColor" strokeWidth="1.300" />
      </svg>
      <div className="ml-2 whitespace-nowrap">
        <p className="flex items-center font-['Roboto','Noto_Sans_CJK_SC',sans-serif] text-[29px] leading-9 font-medium">
          <span className="text-[32px]">3D</span>溜溜网
        </p>
        <p className="font-['DejaVu_Sans',sans-serif] text-[23px] leading-7">3D66.COM</p>
      </div>
    </div>
  );
}

export default function App() {
  return (
    <div className="relative flex min-h-screen flex-col overflow-hidden bg-[#f0f0f0] font-['Open_Sans','Noto_Sans_CJK_SC',sans-serif] text-[15px] leading-5 text-black">
      <header className="flex h-7 items-center gap-1 bg-white pl-0.5">
        <svg viewBox="0 0 20 20" className="size-5" aria-hidden="true">
          <path d="m2 4 11-2 5 3-1 10-6 3-6-1Z" fill="#dc1f27" />
          <path d="m3 6 6 2 8-2M9 12l7-1" fill="none" stroke="#fff" strokeWidth="1.200" />
        </svg>
        <h1 className="text-base">无标题 - SketchUp</h1>
      </header>
      <MenuBar />

      <div className="overflow-hidden py-px">
        <div className="flex">
          <Toolbar name="标准" groups={standardTools} className="border-r pr-px" />
          <Toolbar name="沙箱" groups={sandboxTools} className="ml-20 border-r pr-1" />
          <Toolbar name="视图" groups={viewTools} className="ml-[74px] flex-1" />
        </div>
        <div className="flex">
          <Toolbar name="样式" groups={styleTools} active="textured" className="ml-[451px] border-r pr-0.5" />
        </div>
      </div>

      <main className="flex flex-1">
        <aside aria-label="大工具集" className="h-[598px] w-[69px] shrink-0 overflow-hidden pt-[46px] pl-0.5">
          <div className="mr-1 mb-1 h-0.5 border-t-2 border-dotted border-[#b5b5b5]" />
          {paletteTools.map((group, i) => (
            <div key={i}>
              {i > 0 && <div className="my-[3px] mr-1 ml-0.5 h-px bg-[#909090]" />}
              <div className="grid w-16 grid-cols-2 gap-y-px">
                {group.map((tool) => <ToolButton key={tool[0]} tool={tool} active={tool[0] === 'select'} />)}
              </div>
            </div>
          ))}
        </aside>
        <section className="relative flex-1 overflow-hidden border-t-2 border-l-2 border-[#6f7273]">
          <Scene />
          <div className="absolute right-[152px] bottom-4 w-20 font-['Liberation_Sans',sans-serif] text-[#e8e8e5]">
            <p className="text-[38px] leading-10 font-bold">Bai</p>
            <p className="text-xl leading-6">jingyan</p>
          </div>
          <SiteBadge />
        </section>
      </main>

      <svg viewBox="0 0 170 84" className="pointer-events-none absolute top-[360px] left-[140px] z-30 h-[84px] w-[170px]" aria-hidden="true">
        <path d="M5 78 156 11" stroke="#f00" strokeWidth="2" />
        <path d="m167 6-9 11-6-10Z" fill="#f00" />
      </svg>
    </div>
  );
}
